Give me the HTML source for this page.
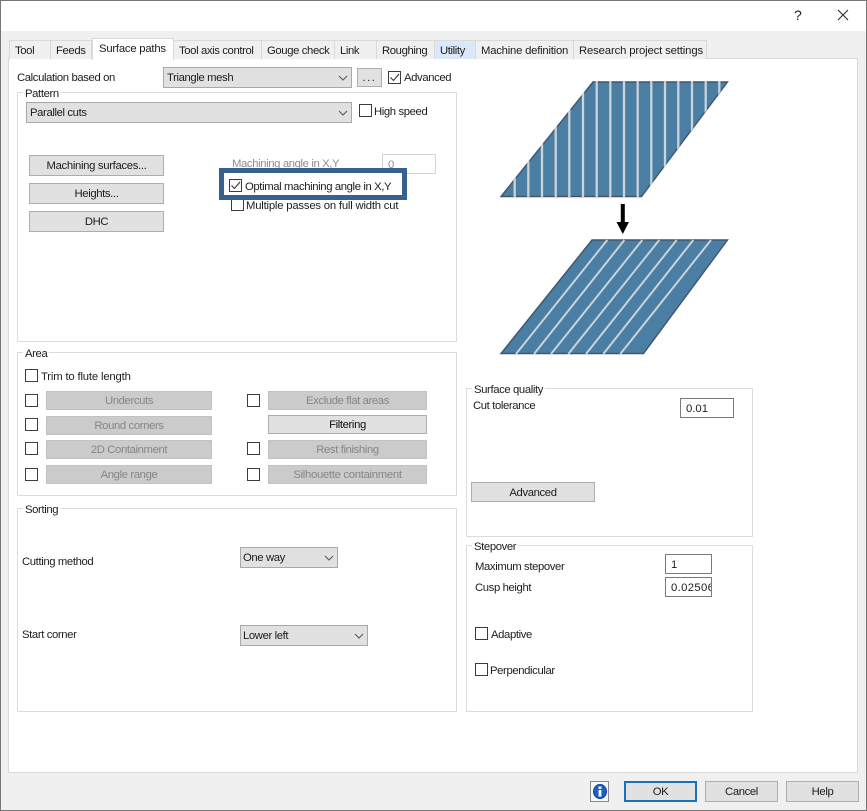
<!DOCTYPE html>
<html>
<head>
<meta charset="utf-8">
<style>
html,body{margin:0;padding:0;background:#fff}
#w{position:relative;width:867px;height:811px;overflow:hidden;background:#fff;font-family:"Liberation Sans",sans-serif;font-size:11.3px;letter-spacing:-.38px;color:#1c1c1c}
#w div{position:absolute;box-sizing:border-box}
.t{line-height:14px;height:14px;white-space:nowrap;margin-top:1px}
.g{color:#8c8c8c}
.tab{top:40px;height:19px;background:#f0f0f0;border:1px solid #d9d9d9;border-bottom:0;line-height:20px;white-space:nowrap;padding-left:5px}
.box{border:1px solid #dcdcdc;background:#fff}
.lb{background:#fff;line-height:14px;height:15px;padding:1px 2px 0;white-space:nowrap}
.b{background:#e1e1e1;border:1px solid #adadad;display:flex;align-items:center;justify-content:center;white-space:nowrap;padding-top:1px}
.d{background:#cbcbcb;border:1px solid #c2c2c2;color:#858585;display:flex;align-items:center;justify-content:center;white-space:nowrap;padding-top:1px}
.c{background:#e1e1e1;border:1px solid #a8a8a8;padding-left:3px;white-space:nowrap}
.c svg{position:absolute;top:6px}
.k{background:#fff;border:1px solid #3c3c3c;width:13px;height:13px}
.k svg{position:absolute;left:0;top:0}
.i{background:#fff;border:1px solid #7a7a7a;padding-left:5px;overflow:hidden;white-space:nowrap;letter-spacing:0}
</style>
</head>
<body>
<div id="w">
<div style="left:0;top:31px;width:867px;height:780px;background:#f0f0f0"></div>
<div style="left:8px;top:58px;width:850px;height:715px;background:#fff;border:1px solid #d9d9d9"></div>

<div class="tab" style="left:9px;width:42px">Tool</div>
<div class="tab" style="left:50px;width:42px">Feeds</div>
<div class="tab" style="left:173px;width:89px">Tool axis control</div>
<div class="tab" style="left:261px;width:74px">Gouge check</div>
<div class="tab" style="left:334px;width:43px">Link</div>
<div class="tab" style="left:376px;width:59px">Roughing</div>
<div class="tab" style="left:434px;width:42px;background:#d9e9f9">Utility</div>
<div class="tab" style="left:475px;width:99px;letter-spacing:-.22px">Machine definition</div>
<div class="tab" style="left:573px;width:134px;letter-spacing:-.14px">Research project settings</div>
<div class="tab" style="left:92px;top:38px;width:82px;height:22px;background:#fff;line-height:20px;padding-left:6px;letter-spacing:-.22px">Surface paths</div>

<div class="t" style="left:794px;top:7px;font-size:14px;letter-spacing:0">?</div>
<svg style="position:absolute;left:837px;top:9px" width="12" height="12"><path d="M1 1L11 11M11 1L1 11" stroke="#222" stroke-width="1" fill="none"/></svg>

<div class="box" style="left:17px;top:92px;width:440px;height:250px"></div>
<div class="lb" style="left:23px;top:86px">Pattern</div>
<div class="box" style="left:17px;top:352px;width:440px;height:144px"></div>
<div class="lb" style="left:23px;top:346px">Area</div>
<div class="box" style="left:17px;top:508px;width:440px;height:204px"></div>
<div class="lb" style="left:23px;top:502px">Sorting</div>
<div class="box" style="left:466px;top:388px;width:287px;height:149px"></div>
<div class="lb" style="left:472px;top:382px">Surface quality</div>
<div class="box" style="left:466px;top:545px;width:287px;height:167px"></div>
<div class="lb" style="left:472px;top:539px">Stepover</div>

<div class="t" style="left:17px;top:70px">Calculation based on</div>
<div class="c" style="left:163px;top:67px;width:189px;height:21px;line-height:21px">Triangle mesh<svg style="left:174px;top:7px" width="10" height="6"><path d="M1 1L5 5L9 1" stroke="#555" fill="none"/></svg></div>
<div class="b" style="left:357px;top:68px;width:25px;height:19px;letter-spacing:1.5px;padding-top:0">...</div>
<div class="k" style="left:388px;top:71px"><svg width="11" height="11"><path d="M1.5 5.5L4.5 8.5L10 2" stroke="#333" stroke-width="1.1" fill="none"/></svg></div>
<div class="t" style="left:404px;top:70px">Advanced</div>

<div class="c" style="left:26px;top:102px;width:326px;height:21px;line-height:21px">Parallel cuts<svg style="left:311px;top:7px" width="10" height="6"><path d="M1 1L5 5L9 1" stroke="#555" fill="none"/></svg></div>
<div class="k" style="left:359px;top:104px"></div>
<div class="t" style="left:374px;top:104px">High speed</div>

<div class="b" style="left:29px;top:155px;width:135px;height:21px;letter-spacing:-.32px">Machining surfaces...</div>
<div class="b" style="left:29px;top:183px;width:135px;height:21px">Heights...</div>
<div class="b" style="left:29px;top:211px;width:135px;height:21px">DHC</div>

<div class="t g" style="left:232px;top:156px">Machining angle in X,Y</div>
<div class="i g" style="left:382px;top:154px;width:54px;height:20px;border-color:#d4d4d4;line-height:20px">0</div>
<div style="left:219px;top:168px;width:188px;height:32px;border:5px solid #37618f;background:#fff"></div>
<div class="k" style="left:229px;top:179px"><svg width="11" height="11"><path d="M1.5 5.5L4.5 8.5L10 2" stroke="#333" stroke-width="1.1" fill="none"/></svg></div>
<div class="t" style="left:245px;top:179px">Optimal machining angle in X,Y</div>
<div style="left:231px;top:200px;width:13px;height:11px;border:1px solid #3c3c3c;border-top:0;background:#fff"></div>
<div class="t" style="left:246px;top:198px;letter-spacing:-.2px">Multiple passes on full width cut</div>

<div class="k" style="left:25px;top:369px"></div>
<div class="t" style="left:41px;top:369px;letter-spacing:-.17px">Trim to flute length</div>

<div class="k" style="left:25px;top:394px"></div>
<div class="d" style="left:46px;top:391px;width:166px;height:19px">Undercuts</div>
<div class="k" style="left:25px;top:418px"></div>
<div class="d" style="left:46px;top:416px;width:166px;height:19px">Round corners</div>
<div class="k" style="left:25px;top:442px"></div>
<div class="d" style="left:46px;top:440px;width:166px;height:19px">2D Containment</div>
<div class="k" style="left:25px;top:468px"></div>
<div class="d" style="left:46px;top:465px;width:166px;height:19px">Angle range</div>

<div class="k" style="left:247px;top:394px"></div>
<div class="d" style="left:268px;top:391px;width:159px;height:19px">Exclude flat areas</div>
<div class="b" style="left:268px;top:415px;width:159px;height:19px;color:#111">Filtering</div>
<div class="k" style="left:247px;top:442px"></div>
<div class="d" style="left:268px;top:440px;width:159px;height:19px">Rest finishing</div>
<div class="k" style="left:247px;top:468px"></div>
<div class="d" style="left:268px;top:465px;width:159px;height:19px;letter-spacing:-.3px">Silhouette containment</div>

<div class="t" style="left:22px;top:554px">Cutting method</div>
<div class="c" style="left:240px;top:547px;width:98px;height:21px;line-height:20px;padding-left:2px">One way<svg style="left:83px;top:7px" width="10" height="6"><path d="M1 1L5 5L9 1" stroke="#555" fill="none"/></svg></div>
<div class="t" style="left:22px;top:627px">Start corner</div>
<div class="c" style="left:240px;top:625px;width:128px;height:21px;line-height:21px;padding-left:2px">Lower left<svg style="left:113px;top:7px" width="10" height="6"><path d="M1 1L5 5L9 1" stroke="#555" fill="none"/></svg></div>

<div class="t" style="left:473px;top:398px">Cut tolerance</div>
<div class="i" style="left:680px;top:398px;width:54px;height:20px;line-height:20px">0.01</div>
<div class="b" style="left:471px;top:482px;width:124px;height:20px">Advanced</div>

<div class="t" style="left:475px;top:559px">Maximum stepover</div>
<div class="i" style="left:665px;top:554px;width:47px;height:20px;line-height:20px">1</div>
<div class="t" style="left:475px;top:580px">Cusp height</div>
<div class="i" style="left:665px;top:577px;width:47px;height:20px;line-height:20px;padding-right:1px;letter-spacing:.35px">0.02506</div>
<div class="k" style="left:475px;top:627px"></div>
<div class="t" style="left:491px;top:627px">Adaptive</div>
<div class="k" style="left:475px;top:663px"></div>
<div class="t" style="left:490px;top:663px">Perpendicular</div>

<svg style="position:absolute;left:490px;top:70px" width="250" height="295" viewBox="490 70 250 295">
<defs>
<clipPath id="p1"><path d="M592.5 81H728.5L642 197H500Z"/></clipPath>
<clipPath id="p2"><path d="M591.5 239H728.5L644 354.5H500Z"/></clipPath>
</defs>
<path d="M593 82H727.5L641.5 196.5H501Z" fill="#4b7ea3" stroke="#3f5570" stroke-width="1.4"/>
<g stroke="#c8d3da" stroke-width="2.3" clip-path="url(#p1)">
<path d="M514.7 75V200M528.3 75V200M542 75V200M555.7 75V200M569.3 75V200M583 75V200M596.7 75V200M610.3 75V200M624 75V200M637.7 75V200M651.3 75V200M665 75V200M678.3 75V200M692 75V200M705.7 75V200M719.3 75V200"/>
</g>
<path d="M620.8 204H624.8V222H629L622.8 234L616.5 222H620.8Z" fill="#000"/>
<path d="M592 240H727.5L643.5 353.5H501Z" fill="#4b7ea3" stroke="#3f5570" stroke-width="1.4"/>
<g stroke="#c8d3da" stroke-width="2" clip-path="url(#p2)">
<path d="M516 354L607.3 240M534 354L624.4 240M551 354L642.3 240M568.3 354L659.3 240M586 354L676.7 240M603.3 354L693.3 240M620.3 354L711 240"/>
</g>
</svg>

<div style="left:590px;top:781px;width:19px;height:21px;background:#f7f7f7;border:1px solid #8a8a8a"></div>
<svg style="position:absolute;left:593px;top:784px" width="14" height="15"><ellipse cx="7" cy="7.5" rx="6.5" ry="7" fill="#1c62c4"/><ellipse cx="7" cy="7.5" rx="6.5" ry="7" fill="none" stroke="#0d3f96"/><rect x="5.6" y="2.5" width="2.8" height="2.4" fill="#fff"/><rect x="5.6" y="6" width="2.8" height="6.5" fill="#fff"/></svg>
<div class="b" style="left:624px;top:781px;width:73px;height:21px;border:2px solid #1673b8">OK</div>
<div class="b" style="left:705px;top:781px;width:73px;height:21px">Cancel</div>
<div class="b" style="left:786px;top:781px;width:73px;height:21px">Help</div>

<div style="left:0;top:0;width:867px;height:1px;background:#777"></div>
<div style="left:0;top:0;width:1px;height:811px;background:#777"></div>
<div style="left:866px;top:0;width:1px;height:811px;background:#777"></div>
<div style="left:0;top:810px;width:867px;height:1px;background:#777"></div>
</div>
</body>
</html>
